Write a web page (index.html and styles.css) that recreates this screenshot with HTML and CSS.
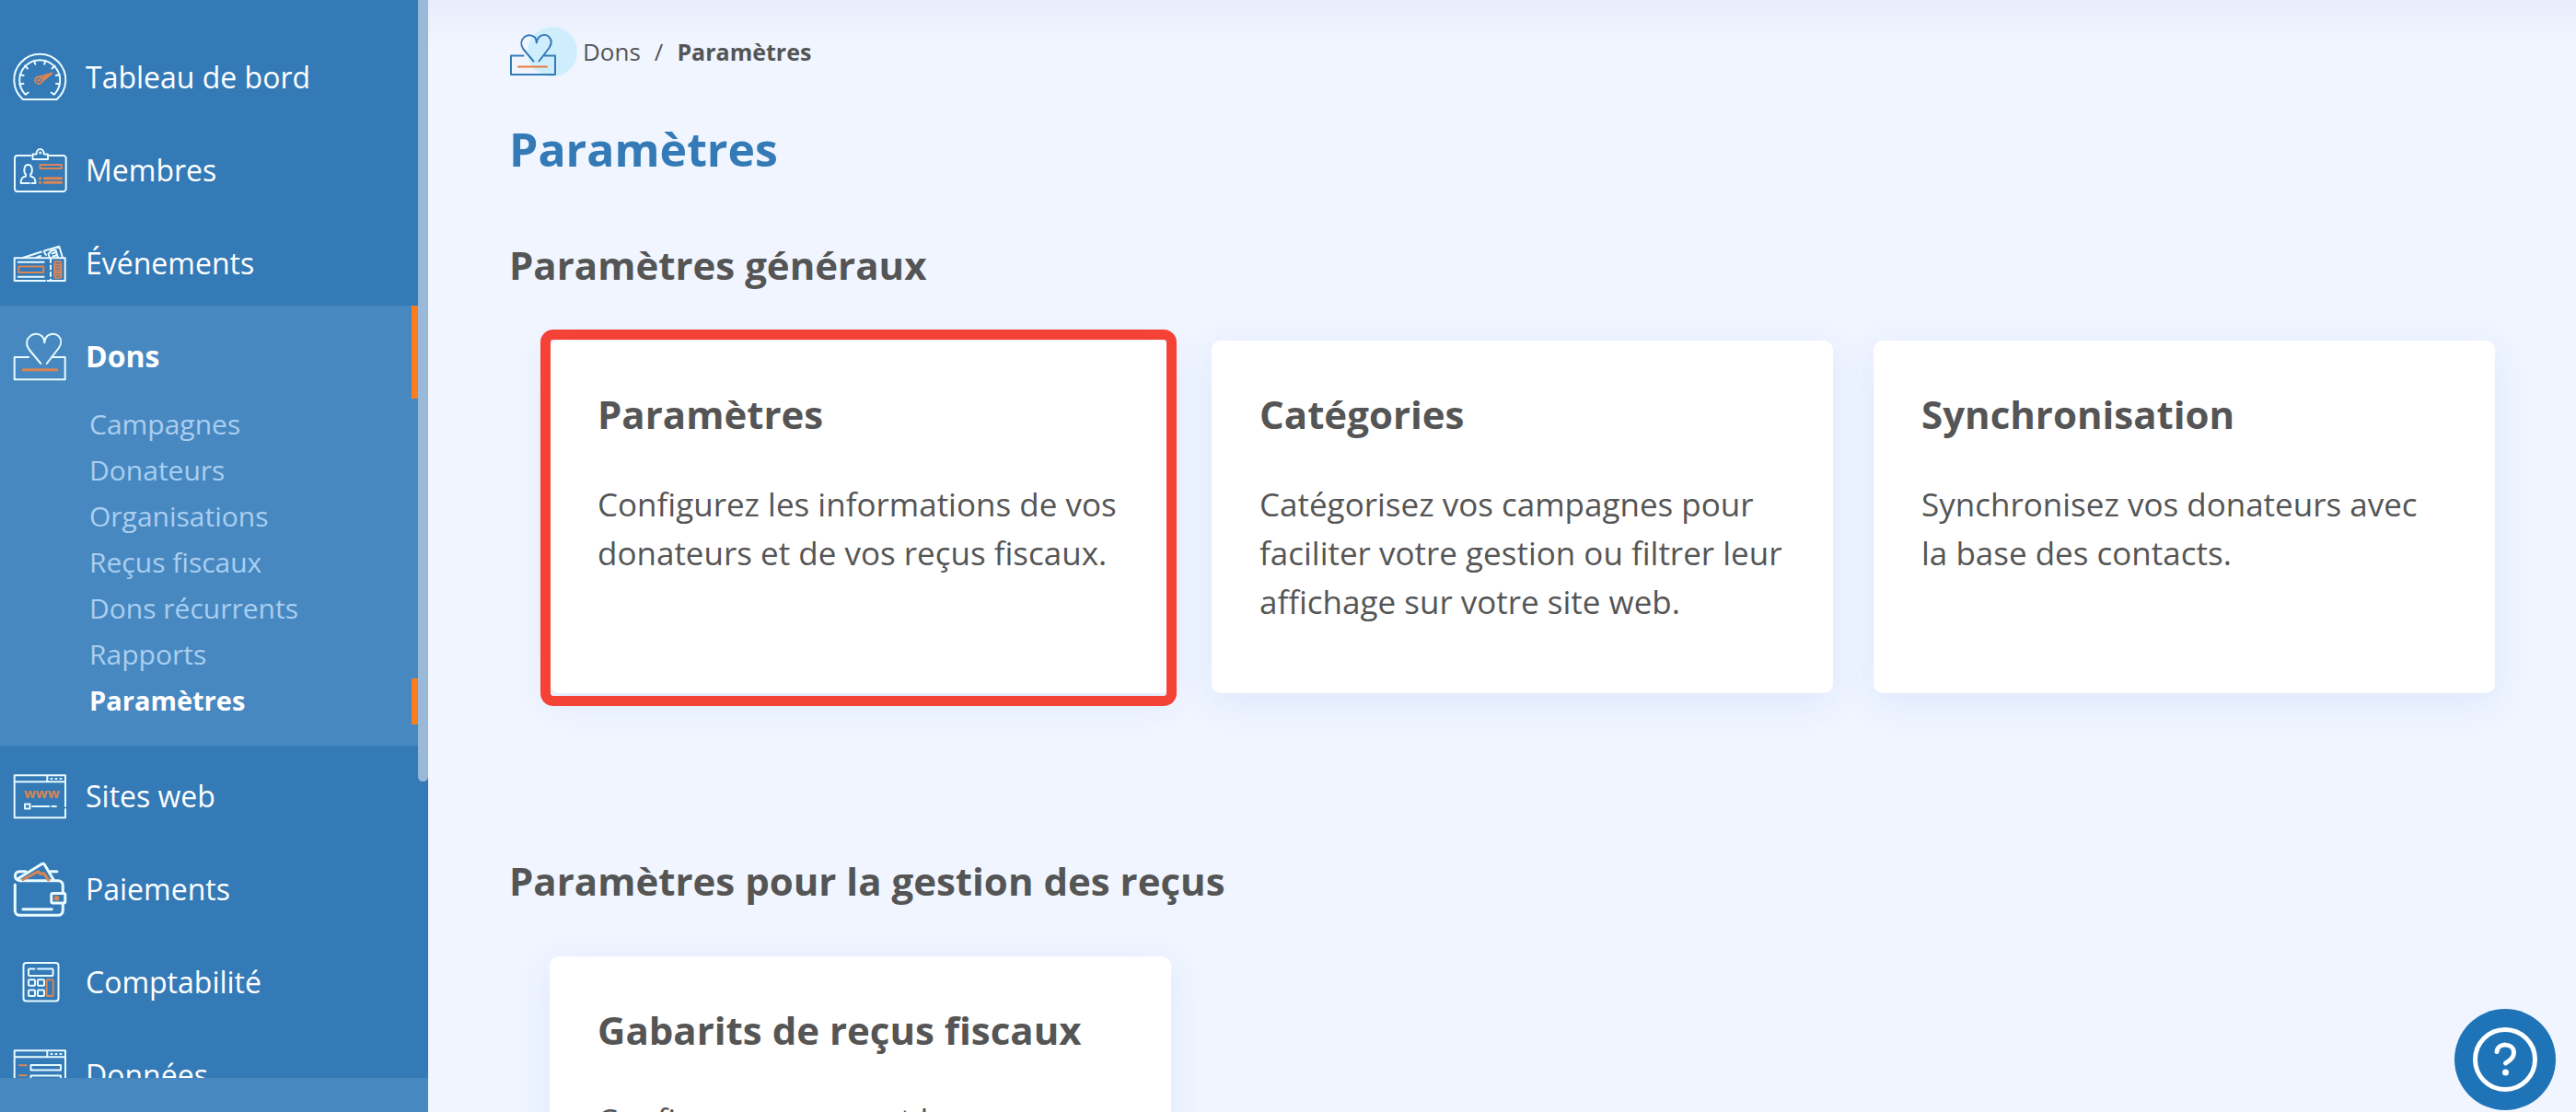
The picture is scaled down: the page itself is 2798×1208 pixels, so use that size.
FILE: index.html
```
<!DOCTYPE html>
<html lang="fr">
<head>
	<meta charset="utf-8">
	<title>Paramètres - Dons</title>
	<link rel="stylesheet" href="styles.css">
</head>
<body>
	<aside class="sidebar">
		<nav class="menu">
			<ul class="menuList">
				<li>
					<a href="#" class="menuLink">
						<svg class="icon" viewBox="0 0 60 60">
							<path d="M12 54A28 28 0 1 1 48.600 54Z"/>
							<path d="M17.700 46.500L14.700 48.800A22 22 0 1 1 45.700 48.800L42.700 46.500"/>
							<path d="M8.500 37.500l4-.7M8.700 27l4 1M14 17.500l3 3M24 11.800l1.300 4M36.500 11.800l-1.300 4M46.500 17.500l-3 3M51.800 27l-4 1M52 37.500l-4-.7"/>
							<g class="orange"><circle cx="29" cy="33.200" r="3.800"/><circle cx="29" cy="33.200" r=".8"/><path d="M30 29.400L43.700 25.500L32.600 34.500M33 31.500l5-2.800"/></g>
						</svg>
						Tableau de bord
					</a>
				</li>
				<li>
					<a href="#" class="menuLink">
						<svg class="icon" viewBox="0 0 60 60">
							<path d="M20.300 14H6a3 3 0 0 0-3 3V50a3 3 0 0 0 3 3H55.700a3 3 0 0 0 3-3V17a3 3 0 0 0-3-3H39"/>
							<path d="M22.500 12.500H26.500C26.500 5 34.800 5 34.800 12.500H39V18H22.500Z"/><circle cx="30.700" cy="11" r=".6"/>
							<path d="M15 34.500C12.500 32 12.500 24 17.600 24S22.700 32 20.200 34.500V36.500C24 37.500 25.500 39 25.500 44H21.500M19 44H9.700C9.700 39 11 37.500 15 36.500V34.500"/>
							<g class="orange"><path d="M30.500 24H53.700V28H30.500Z"/><path class="bold" d="M35.300 38.700H53.700M35.300 43.300H53.700M30.300 38.700H31M30.300 43.300H31"/></g>
						</svg>
						Membres
					</a>
				</li>
				<li>
					<a href="#" class="menuLink">
						<svg class="icon" viewBox="0 0 60 60">
							<path d="M36 49H2.700V24.300H57.700V49H38.500"/>
							<path d="M12 24L32 17.500M35 16.500L51.300 11.700L55 24M26 24L31 22M35 18l2 3M41 24L39.500 20L42.500 16.500L47.500 15.500L50 24M43.500 19.500l4-1.200M44.500 22.500l3.500-1"/>
							<path d="M6.700 28.700H34.700M6.700 44.700H34.700"/><path stroke-dasharray="4 3.500" d="M42 25V49"/>
							<g class="orange"><rect x="7.300" y="33.500" width="27" height="6.500"/><rect x="46.300" y="28.300" width="7" height="17.400" rx="1"/><path d="M47 31.500h6M47 34.500h6M47 37.500h6M47 40h6M47 42.800h6"/></g>
						</svg>
						Événements
					</a>
				</li>
				<li class="open">
					<a href="#" class="menuLink current">
						<svg class="icon" viewBox="0 0 60 60">
							<path d="M18 31H2.700V55.300H57.700V31H43"/>
							<path d="M31.300 38L18.500 22.500C10.500 11.500 24 .500 33 8.500Q35.300 11 35.300 15.300Q35.500 10.500 38.500 7.800C48 1 58 11.500 50.500 21.500L37.700 38"/>
							<path class="orange bold" d="M12 44.700H48.700"/>
						</svg>
						Dons
					</a>
					<ul class="subMenu">
						<li><a href="#">Campagnes</a></li>
						<li><a href="#">Donateurs</a></li>
						<li><a href="#">Organisations</a></li>
						<li><a href="#">Reçus fiscaux</a></li>
						<li><a href="#">Dons récurrents</a></li>
						<li><a href="#">Rapports</a></li>
						<li><a href="#" class="current">Paramètres</a></li>
					</ul>
				</li>
				<li>
					<a href="#" class="menuLink">
						<svg class="icon" viewBox="0 0 60 60">
							<path d="M58 41V7.300H2.700V53.300H58V44M2.700 14.300H58M38.300 7.300V14.300"/>
							<path d="M42.500 11h1M47.500 11h1M52.500 11h1M22.300 41H40.300M43.300 41H48"/><rect x="14" y="38.500" width="5.500" height="5"/>
							<text x="13" y="32">www</text>
						</svg>
						Sites web
					</a>
				</li>
				<li>
					<a href="#" class="menuLink">
						<svg class="icon heavy" viewBox="0 0 60 60">
							<path d="M3.300 25V53.300a5 5 0 0 0 5 5H50.300a5 5 0 0 0 5-5V46M55.300 33V25.700a5 5 0 0 0-5-5H8.500C2 20.500 1.500 10.700 8.500 10.700H15M42 10.700H49"/>
							<path d="M6.500 18.500L32.500 2.500Q34.500 1.500 35.500 3.500L45.300 20M12 51.700H43.300"/>
							<rect x="42.800" y="34.500" width="15" height="10.500" rx="1.500"/>
							<path class="orange" d="M12 19.500L28.700 10.700L30.700 13.500L34.300 12.500L39.700 20"/>
							<circle class="dot" cx="48.500" cy="39.800" r="2.800"/>
						</svg>
						Paiements
					</a>
				</li>
				<li>
					<a href="#" class="menuLink">
						<svg class="icon" viewBox="0 0 60 60">
							<rect x="12.500" y="9" width="38" height="41.600" rx="3"/>
							<path d="M24.500 15.500H19a1 1 0 0 0-1 1V22a1 1 0 0 0 1 1H43.600a1 1 0 0 0 1-1V16.500a1 1 0 0 0-1-1H28"/>
							<rect x="18" y="27.300" width="7" height="6.500" rx="1"/><rect x="28" y="27.300" width="7" height="6.500" rx="1"/>
							<rect x="18" y="38.600" width="7" height="6.500" rx="1"/><rect x="28" y="38.600" width="7" height="6.500" rx="1"/>
							<rect class="orange" x="37.700" y="27.300" width="7" height="17.800" rx="1"/>
						</svg>
						Comptabilité
					</a>
				</li>
				<li>
					<a href="#" class="menuLink">
						<svg class="icon" viewBox="0 0 60 60">
							<path d="M2.700 3.300H58V50H2.700ZM2.700 10.300H58M38.300 3.300V10.300M42.500 7h1M47.500 7h1M52.500 7h1"/>
							<path d="M20.500 19H53V24.500H20.500ZM20.500 30.500H53V36H20.500Z"/>
							<path class="orange" d="M8 19.300H15.700M8 30.300H15.700"/>
						</svg>
						Données
					</a>
				</li>
			</ul>
			<span class="scrollThumb"></span>
		</nav>
		<div class="sidebarFoot"></div>
	</aside>

	<main class="content">
		<div class="breadcrumb">
			<svg class="crumbIcon" viewBox="0 0 76 56">
				<circle class="halo" cx="47" cy="28.200" r="27"/>
				<path d="M15.500 32.500H2V53H50V32.500H38.500"/>
				<path d="M26.500 38.500L15.500 25.500C8.500 15.500 20 5.500 28 12.500Q29.800 14.500 29.800 18.500Q30 14.500 32.800 12C41 6 49.500 15 43.500 24L32.500 38.500"/>
				<path class="orange bold" d="M10 44.500H41"/>
			</svg>
			<a href="#">Dons</a>
			<span class="sep">/</span>
			<strong>Paramètres</strong>
		</div>

		<h1>Paramètres</h1>

		<section>
			<h2>Paramètres généraux</h2>
			<div class="cards">
				<a href="#" class="card highlight">
					<h3>Paramètres</h3>
					<p>Configurez les informations de vos donateurs et de vos reçus fiscaux.</p>
				</a>
				<a href="#" class="card">
					<h3>Catégories</h3>
					<p>Catégorisez vos campagnes pour faciliter votre gestion ou filtrer leur affichage sur votre site web.</p>
				</a>
				<a href="#" class="card">
					<h3>Synchronisation</h3>
					<p>Synchronisez vos donateurs avec la base des contacts.</p>
				</a>
			</div>
		</section>

		<section>
			<h2>Paramètres pour la gestion des reçus</h2>
			<div class="cards">
				<a href="#" class="card">
					<h3>Gabarits de reçus fiscaux</h3>
					<p>Configurez comment les reçus</p>
				</a>
			</div>
		</section>
	</main>

	<button type="button" class="help" aria-label="Aide">
		<svg viewBox="0 0 110 110">
			<circle cx="55" cy="55" r="32.500"/>
			<path d="M46 46.500C47 36.500 64.500 36.500 64.500 47.500C64.500 54.500 58 57 55.500 59"/>
			<circle class="point" cx="55.500" cy="69" r="3.500"/>
		</svg>
	</button>
</body>
</html>
```
FILE: styles.css
```
* {
	box-sizing: border-box;
}
body {
	margin: 0;
	display: flex;
	height: 100vh;
	overflow: hidden;
	font-family: "Open Sans", "Noto Sans", sans-serif;
	color: #555;
	background: #f0f5ff;
}
a {
	color: inherit;
	text-decoration: none;
}
ul {
	list-style: none;
	margin: 0;
	padding: 0;
}
h1, h2, h3, p {
	margin: 0;
}
svg {
	fill: none;
	stroke-width: 2;
	stroke-linecap: round;
	stroke-linejoin: round;
}

/* menu */
.sidebar {
	display: flex;
	flex-direction: column;
	flex: none;
	width: 465px;
	background: #337ab7;
	color: #fff;
}
.menu {
	position: relative;
	flex: 1;
	min-height: 0;
	overflow: hidden;
}
.menuList {
	margin-right: 11px;
	padding-top: 29px;
}
.menuLink {
	display: flex;
	align-items: center;
	gap: 20px;
	height: 101px;
	padding: 8px 0 0 13px;
	font-size: 32px;
	border-right: 7px solid transparent;
}
.icon {
	flex: none;
	width: 60px;
	height: 60px;
	stroke: #e8fbff;
}
.icon .orange, .crumbIcon .orange {
	stroke: #d98555;
}
.icon .bold {
	stroke-width: 3;
}
.icon .dot {
	fill: #d98555;
	stroke: none;
}
.icon text {
	font-size: 15px;
	font-weight: bold;
	fill: #d98555;
	stroke: none;
}
.heavy, .heavy .orange {
	stroke-width: 3;
}
.open {
	padding-bottom: 23px;
	background: #4888c0;
}
.subMenu {
	padding-top: 4px;
}
.subMenu a {
	display: block;
	height: 50px;
	padding-left: 97px;
	font-size: 30px;
	line-height: 48px;
	color: #a9cff0;
	border-right: 7px solid transparent;
}
.menuLink.current, .subMenu .current {
	font-weight: 700;
	color: #fff;
	border-right-color: #fa7d1e;
}
.subMenu .current {
	font-size: 29px;
}
.scrollThumb {
	position: absolute;
	top: 0;
	right: 0;
	bottom: 322px;
	width: 11px;
	border-radius: 0 0 6px 6px;
	background: #9ab9d8;
}
.sidebarFoot {
	flex: none;
	height: 37px;
	background: #4888c0;
}

/* page */
.content {
	flex: 1;
	min-width: 0;
	overflow: hidden;
	padding: 28px 44px 0 88px;
	background: linear-gradient(#e9ecfb, #f0f5ff 48px);
}
.breadcrumb {
	display: flex;
	align-items: center;
	height: 56px;
	font-size: 26px;
}
.breadcrumb strong {
	font-size: 25px;
}
.crumbIcon {
	width: 76px;
	height: 56px;
	margin-right: 4px;
	stroke: #337ab7;
}
.crumbIcon .halo {
	fill: #cfeefd;
	stroke: none;
}
.crumbIcon .orange {
	stroke: #e8793a;
}
.sep {
	margin: 0 15px;
}
h1 {
	margin-top: 44px;
	font-size: 50px;
	line-height: 68px;
	color: #337ab7;
}
h2 {
	margin: 61px 0 51px;
	font-size: 42px;
	line-height: 62px;
}
.cards {
	display: grid;
	grid-template-columns: repeat(3, 1fr);
	gap: 44px;
	padding: 0 44px;
}
.card {
	position: relative;
	padding: 49px 52px 73px;
	border-radius: 10px;
	background: #fff;
	box-shadow: 0 10px 40px rgba(60, 110, 230, .1);
}
.card h3 {
	margin-bottom: 40px;
	font-size: 42px;
	line-height: 62px;
}
.card p {
	font-size: 35px;
	line-height: 53px;
}
.highlight::after {
	content: "";
	position: absolute;
	top: -12px;
	right: -6px;
	bottom: -14px;
	left: -10px;
	border: 11px solid #f44336;
	border-radius: 14px;
}
section + section {
	padding-top: 112px;
}

.help {
	position: fixed;
	right: 22px;
	bottom: 2px;
	width: 110px;
	height: 110px;
	padding: 0;
	border: 0;
	border-radius: 50%;
	background: #1f73b7;
	cursor: pointer;
}
.help svg {
	display: block;
	stroke: #fff;
	stroke-width: 5;
}
.help .point {
	fill: #fff;
	stroke: none;
}
```
